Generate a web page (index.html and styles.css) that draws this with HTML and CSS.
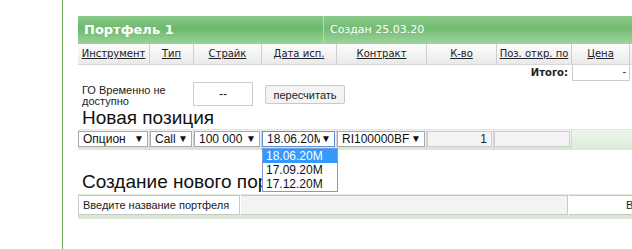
FILE: index.html
```html
<!DOCTYPE html>
<html lang="ru">
<head>
    <meta charset="UTF-8">
    <title>Портфель 1</title>
    <link rel="stylesheet" href="styles.css">
</head>
<body>
    <div class="frame">

        <!-- Портфель -->
        <div class="portfolio">
            <div class="title-bar">
                <div class="title">Портфель 1</div>
                <div class="created">Создан 25.03.20</div>
            </div>
            <div class="cols">
                <div class="col"><a>Инструмент</a></div>
                <div class="col"><a>Тип</a></div>
                <div class="col"><a>Страйк</a></div>
                <div class="col"><a>Дата исп.</a></div>
                <div class="col"><a>Контракт</a></div>
                <div class="col"><a>К-во</a></div>
                <div class="col"><a>Поз. откр. по</a></div>
                <div class="col"><a>Цена</a></div>
                <div class="col"></div>
            </div>
            <div class="total-row">
                <div class="total-label">Итого:</div>
                <div class="total-box">-</div>
            </div>
        </div>

        <!-- ГО -->
        <div class="margin-row">
            <div class="margin-text">ГО Временно не доступно</div>
            <div class="margin-box">--</div>
            <button class="btn">пересчитать</button>
        </div>

        <h2 class="section-title">Новая позиция</h2>
        <div class="new-row">
            <div class="cell"><div class="fake-select w-type">Опцион<span class="arrow">▼</span></div></div>
            <div class="cell"><div class="fake-select">Call<span class="arrow">▼</span></div></div>
            <div class="cell"><div class="fake-select">100 000<span class="arrow">▼</span></div></div>
            <div class="cell date-cell">
                <div class="fake-select focused">18.06.20M<span class="arrow">▼</span></div>
                <ul class="dropdown">
                    <li class="selected">18.06.20M</li>
                    <li>17.09.20M</li>
                    <li>17.12.20M</li>
                </ul>
            </div>
            <div class="cell"><div class="fake-select clip">RI100000BFI<span class="arrow">▼</span></div></div>
            <div class="cell"><div class="qty">1</div></div>
            <div class="cell"><div class="qty"></div></div>
            <div class="cell green-cell"></div>
        </div>

        <h2 class="section-title second">Создание нового портфеля</h2>
        <div class="create-row">
            <div class="create-label">Введите название портфеля</div>
            <div class="create-input"></div>
            <div class="create-btn">Ввод</div>
        </div>

    </div>
</body>
</html>
```

FILE: styles.css
```css
body {
    margin: 0;
    padding: 0;
    background: #fff;
    overflow: hidden;
    font-family: "Liberation Sans", Arial, sans-serif;
    font-size: 12px;
    color: #222;
}

/* Рамка слева */
.frame {
    margin-left: 62px;
    border-left: 1px solid #6aa85c;
    height: 249px;
    padding-top: 16px;
    padding-left: 15px;
    box-sizing: border-box;
    width: 700px;
}

/* Шапка портфеля */
.title-bar {
    display: flex;
    height: 28px;
    color: #fff;
    font-family: "DejaVu Sans", Verdana, sans-serif;
}

.title {
    width: 246px;
    padding-left: 6px;
    box-sizing: border-box;
    line-height: 28px;
    font-size: 13px;
    font-weight: bold;
    background: linear-gradient(#8ac98a, #6db86d 45%, #9ad39a);
    border-right: 1px solid #b4dcb0;
}

.created {
    flex: 1;
    padding-left: 6px;
    line-height: 28px;
    font-size: 11px;
    background: linear-gradient(#8dcb8d, #72bb72 45%, #9fd59f);
}

.cols {
    display: grid;
    grid-template-columns: 72px 44px 68px 75px 90px 70px 75px 58px 68px;
    height: 20px;
    background: linear-gradient(#fdfdfd, #e9e9e9);
    border-bottom: 1px solid #d8d8d8;
    font-family: "DejaVu Sans", Tahoma, sans-serif;
    font-size: 10px;
}

.col {
    border-right: 1px solid #cfcfcf;
    text-align: center;
    line-height: 19px;
}

.col a {
    color: #222;
    text-decoration: underline;
}

.total-row {
    display: flex;
    height: 16px;
    font-family: "DejaVu Sans", Tahoma, sans-serif;
    font-size: 10px;
}

.total-label {
    width: 490px;
    text-align: right;
    font-weight: bold;
    padding-right: 4px;
    line-height: 15px;
}

.total-box {
    width: 58px;
    box-sizing: border-box;
    border: 1px solid #ccc;
    border-top: none;
    text-align: right;
    padding-right: 3px;
    line-height: 14px;
}

/* ГО */
.margin-row {
    display: flex;
    align-items: flex-start;
    height: 25px;
    padding-top: 1px;
}

.margin-text {
    width: 111px;
    padding: 3px 0 0 4px;
    font-size: 11px;
    line-height: 11px;
}

.margin-box {
    width: 60px;
    height: 24px;
    box-sizing: border-box;
    border: 1px solid #ccc;
    text-align: center;
    line-height: 22px;
    font-size: 12px;
}

.btn {
    margin: 3px 0 0 12px;
    width: 80px;
    height: 19px;
    padding: 0;
    background: #f3f3f3;
    border: 1px solid #c8c8c8;
    border-radius: 2px;
    font-family: "Liberation Sans", Arial, sans-serif;
    font-size: 11px;
    color: #222;
}

.section-title {
    margin: 0;
    padding-left: 4px;
    font-weight: normal;
    font-size: 19px;
    line-height: 22px;
    height: 22px;
    color: #111;
}

.section-title.second {
    margin-top: 21px;
    height: 23px;
}

/* Новая позиция */
.new-row {
    display: grid;
    grid-template-columns: 72px 44px 68px 75px 90px 67px 78px 60px;
    height: 20px;
    border-top: 1px solid #dfe8dd;
    background: linear-gradient(#f3f3f3 16px, #d9e8d6 16px);
}

.cell {
    border-right: 1px solid #d4d4d4;
    padding-top: 1px;
    box-sizing: border-box;
}

.fake-select {
    position: relative;
    height: 16px;
    margin-right: 1px;
    box-sizing: border-box;
    border: 1px solid #a9a9a9;
    background: #fff;
    padding-left: 4px;
    font-size: 12px;
    line-height: 14px;
    white-space: nowrap;
    overflow: hidden;
    color: #111;
}

.fake-select.focused {
    border-color: #5d8fd1;
}

.arrow {
    position: absolute;
    right: 3px;
    top: 0;
    font-size: 10px;
    background: #fff;
    padding-left: 1px;
}

.date-cell {
    position: relative;
}

.dropdown {
    position: absolute;
    left: 0;
    top: 18px;
    width: 74px;
    margin: 0;
    padding: 0;
    list-style: none;
    border: 1px solid #7a9cd3;
    background: #fff;
    z-index: 2;
}

.dropdown li {
    padding-left: 3px;
    height: 14px;
    line-height: 14px;
    font-size: 12px;
    color: #111;
}

.dropdown li.selected {
    background: #3399ff;
    color: #fff;
}

.qty {
    height: 16px;
    box-sizing: border-box;
    margin-right: 1px;
    border: 1px solid #cdcdcd;
    background: #f4f4f4;
    text-align: right;
    padding-right: 4px;
    line-height: 14px;
    font-size: 12px;
}

.green-cell {
    border-right: none;
    background: linear-gradient(#eef6ec, #dcecd8);
}

/* Новый портфель */
.create-row {
    display: flex;
    height: 25px;
    box-sizing: border-box;
    border-top: 1px solid #dfe8dd;
    border-bottom: 4px solid #d9e8d6;
    font-size: 11px;
}

.create-label {
    width: 162px;
    box-sizing: border-box;
    border: 1px solid #c8c8c8;
    padding-left: 4px;
    line-height: 18px;
}

.create-input {
    width: 326px;
    background: #f3f3f3;
    border: 1px solid #c8c8c8;
    border-left: none;
    margin-left: 1px;
}

.create-btn {
    width: 80px;
    border: 1px solid #c8c8c8;
    border-left: none;
    margin-left: 1px;
    padding-left: 57px;
    line-height: 18px;
}
```
